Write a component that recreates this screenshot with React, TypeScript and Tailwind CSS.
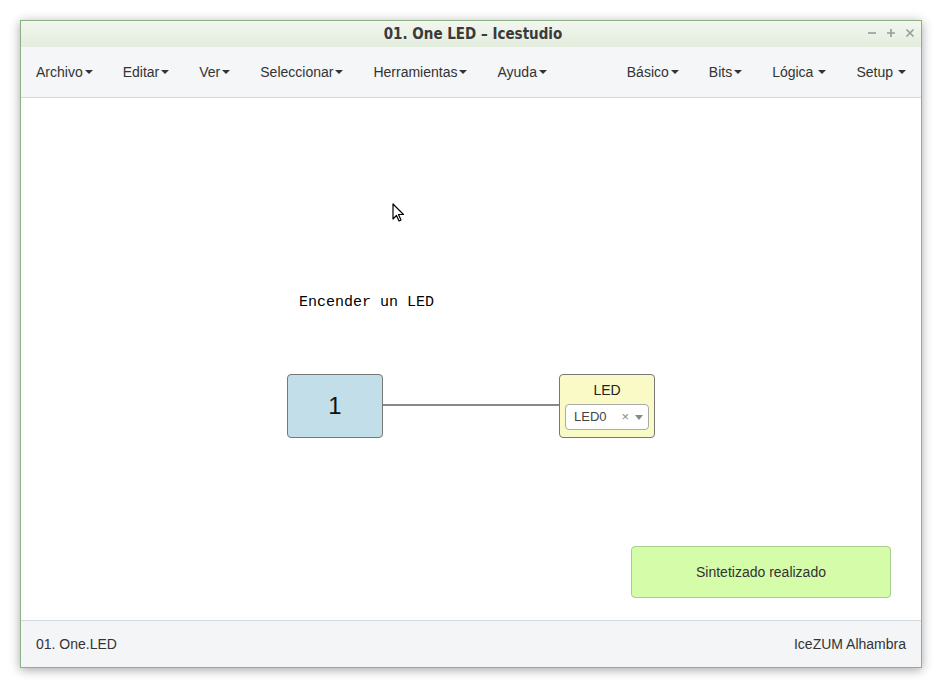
import React from "react";

const Caret = () => (
  <span className="inline-block ml-[2px] align-middle w-0 h-0 border-l-[4px] border-r-[4px] border-t-[4px] border-l-transparent border-r-transparent border-t-[#333]" />
);

const MenuItem = ({ label, space }: { label: string; space?: boolean }) => (
  <div className="px-[15px] flex items-center text-[14px] text-[#333]">
    <span>{label}</span>
    {space && <span className="w-[3px]" />}
    <Caret />
  </div>
);

export default function App() {
  return (
    <div className="w-[942px] h-[688px] bg-white pt-[20px] pl-[20px]" style={{ fontFamily: '"Liberation Sans", Arial, sans-serif' }}>
      <div className="w-[902px] h-[648px] flex flex-col border border-[#8fb087] shadow-[0_2px_10px_rgba(0,0,0,0.35)] bg-white">
        {/* Title bar */}
        <div className="relative h-[26px] flex items-center justify-center bg-gradient-to-b from-[#f2f7ef] to-[#e3ecdd]">
          <span className="text-[15px] font-bold text-[#3a3a3a] ml-[4px]" style={{ fontFamily: '"DejaVu Sans Condensed", "DejaVu Sans", sans-serif', fontStretch: "condensed" }}>
            01. One LED – Icestudio
          </span>
          <div className="absolute right-[6px] top-[7px] flex items-center gap-[9px] text-[#999]">
            <svg width="10" height="10" viewBox="0 0 10 10"><path d="M1 5h8" stroke="#9a9a9a" strokeWidth="1.6" /></svg>
            <svg width="10" height="10" viewBox="0 0 10 10"><path d="M1 5h8M5 1v8" stroke="#9a9a9a" strokeWidth="1.6" /></svg>
            <svg width="10" height="10" viewBox="0 0 10 10"><path d="M1.5 1.5l7 7M8.5 1.5l-7 7" stroke="#9a9a9a" strokeWidth="1.6" /></svg>
          </div>
        </div>
        {/* Menu bar */}
        <div className="h-[51px] flex items-center justify-between bg-[#f5f6f8] border-b border-[#d3dadf]">
          <div className="flex">
            <MenuItem label="Archivo" />
            <MenuItem label="Editar" />
            <MenuItem label="Ver" />
            <MenuItem label="Seleccionar" />
            <MenuItem label="Herramientas" />
            <MenuItem label="Ayuda" />
          </div>
          <div className="flex">
            <MenuItem label="Básico" />
            <MenuItem label="Bits" />
            <MenuItem label="Lógica" space />
            <MenuItem label="Setup" space />
          </div>
        </div>
        {/* Canvas */}
        <div className="relative flex-1 bg-white">
          <svg className="absolute left-[371px] top-[105px]" width="14" height="20" viewBox="0 0 14 20">
            <path d="M1 1v15l3.5-3.5 2.5 5.5 2-1-2.5-5.5h5z" fill="white" stroke="black" strokeWidth="1.2" strokeLinejoin="round" />
          </svg>
          <div className="absolute left-[278px] top-[194px] text-[15px] text-black" style={{ fontFamily: '"Liberation Mono", monospace' }}>
            Encender un LED
          </div>
          <div className="absolute left-[361px] top-[306px] w-[178px] h-[2px] bg-[#888]" />
          <div className="absolute left-[266px] top-[276px] w-[96px] h-[64px] rounded-[4px] border border-[#777] bg-[#c2dfe9] flex items-center justify-center text-[24px] text-[#111]">
            1
          </div>
          <div className="absolute left-[538px] top-[276px] w-[96px] h-[64px] rounded-[4px] border border-[#777] bg-[#fafac7] flex flex-col items-center">
            <div className="text-[14px] text-[#222] mt-[7px] leading-[16px]">LED</div>
            <div className="mt-[6px] w-[84px] h-[26px] bg-white border border-[#aaa] rounded-[4px] flex items-center pl-[8px] pr-[5px] text-[13px] text-[#444]">
              <span className="flex-1">LED0</span>
              <span className="text-[13px] text-[#888] mr-[6px]">×</span>
              <span className="w-0 h-0 border-l-[4px] border-r-[4px] border-t-[5px] border-l-transparent border-r-transparent border-t-[#888]" />
            </div>
          </div>
          <div className="absolute left-[610px] top-[448px] w-[260px] h-[52px] rounded-[4px] border border-[#a5cf8b] bg-[#d5fca9] flex items-center justify-center text-[14px] text-[#333]">
            Sintetizado realizado
          </div>
        </div>
        {/* Footer */}
        <div className="h-[47px] flex items-center justify-between px-[15px] bg-[#f4f5f7] border-t border-[#d3dadf] text-[14px] text-[#333]">
          <span>01. One.LED</span>
          <span>IceZUM Alhambra</span>
        </div>
      </div>
    </div>
  );
}
